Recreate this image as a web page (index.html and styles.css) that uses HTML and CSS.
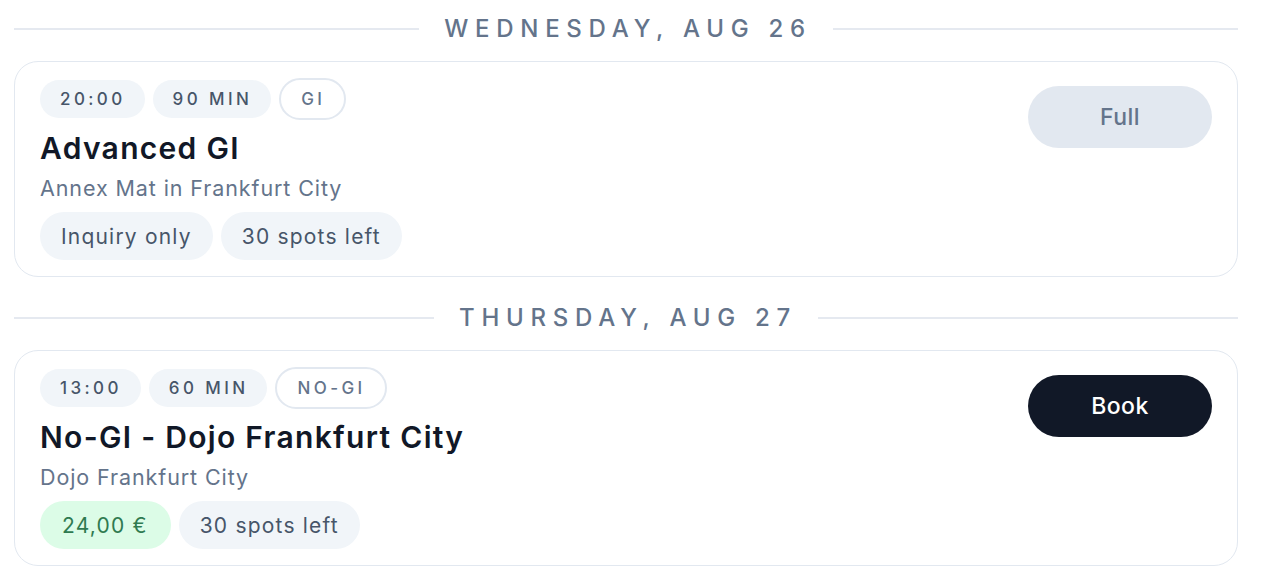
FILE: index.html
```html
<!DOCTYPE html>
<html lang="en">
<head>
<meta charset="utf-8">
<title>Schedule</title>
<link rel="stylesheet" href="styles.css">
</head>
<body>
<main class="schedule">
  <section class="day">
    <div class="day-divider">
      <span class="day-line"></span>
      <h2 class="day-label">Wednesday, Aug 26</h2>
      <span class="day-line"></span>
    </div>
    <article class="session">
      <div class="session-info">
        <div class="tags">
          <span class="tag">20:00</span>
          <span class="tag">90 min</span>
          <span class="tag tag-outline">GI</span>
        </div>
        <h3 class="session-title">Advanced GI</h3>
        <p class="session-place">Annex Mat in Frankfurt City</p>
        <div class="chips">
          <span class="chip">Inquiry only</span>
          <span class="chip">30 spots left</span>
        </div>
      </div>
      <button class="action action-full" type="button">Full</button>
    </article>
  </section>
  <section class="day">
    <div class="day-divider">
      <span class="day-line"></span>
      <h2 class="day-label">Thursday, Aug 27</h2>
      <span class="day-line"></span>
    </div>
    <article class="session">
      <div class="session-info">
        <div class="tags">
          <span class="tag">13:00</span>
          <span class="tag">60 min</span>
          <span class="tag tag-outline">No-GI</span>
        </div>
        <h3 class="session-title">No-GI - Dojo Frankfurt City</h3>
        <p class="session-place">Dojo Frankfurt City</p>
        <div class="chips">
          <span class="chip chip-price">24,00 €</span>
          <span class="chip">30 spots left</span>
        </div>
      </div>
      <button class="action action-book" type="button">Book</button>
    </article>
  </section>
</main>
</body>
</html>
```

FILE: styles.css
```css
* { box-sizing: border-box; }

html, body {
  margin: 0;
  padding: 0;
  background: #ffffff;
}

body {
  font-family: Inter, "Noto Sans", "Liberation Sans", sans-serif;
  color: #0f172a;
}

.schedule {
  width: 1224px;
  margin-left: 14px;
  display: flex;
  flex-direction: column;
  gap: 12px;
}

.day {
  display: flex;
  flex-direction: column;
}

.day-divider {
  display: flex;
  align-items: center;
  gap: 25px;
  height: 30px;
  margin-top: 14px;
  margin-bottom: 17px;
}

.day-line {
  flex: 1;
  height: 2px;
  background: #e5e9f0;
}

.day-label {
  margin: 0;
  font-size: 24px;
  font-weight: 500;
  letter-spacing: 0.28em;
  margin-right: -4px;
  text-transform: uppercase;
  color: #64748b;
  line-height: 30px;
}

.session {
  display: flex;
  justify-content: space-between;
  align-items: flex-start;
  border: 1.5px solid #e2e8f0;
  border-radius: 24px;
  padding: 16px 25px 16px 25px;
  height: 216px;
}

.session-info {
  display: flex;
  flex-direction: column;
  align-items: flex-start;
}

.tags {
  display: flex;
  align-items: center;
  gap: 8px;
  height: 42px;
}

.tag {
  display: inline-flex;
  align-items: center;
  height: 38px;
  padding: 0 19px 0 20px;
  border-radius: 999px;
  background: #f1f5f9;
  color: #475569;
  font-size: 17px;
  font-weight: 500;
  letter-spacing: 0.2em;
  text-transform: uppercase;
}

.tag-outline {
  height: 42px;
  background: #ffffff;
  border: 2px solid #e2e8f0;
  color: #64748b;
  padding: 0 19px 0 20px;
}

.session-title {
  margin: 10px 0 0;
  font-size: 30px;
  font-weight: 600;
  letter-spacing: 1.3px;
  line-height: 36px;
  color: #111827;
}

.session-place {
  margin: 8px 0 0;
  font-size: 21.5px;
  letter-spacing: 0.9px;
  line-height: 28px;
  color: #64748b;
}

.chips {
  display: flex;
  gap: 8px;
  margin-top: 10px;
}

.chip {
  display: inline-flex;
  align-items: center;
  height: 48px;
  padding: 0 21px;
  border-radius: 999px;
  background: #f1f5f9;
  color: #475569;
  font-size: 21px;
  letter-spacing: 1.2px;
}

.chip-price {
  background: #dcfce7;
  color: #2f7a50;
  padding: 0 23px 0 22px;
}

.action {
  margin-top: 8px;
  width: 184px;
  height: 62px;
  border: none;
  border-radius: 999px;
  font-family: inherit;
  font-size: 23px;
  font-weight: 500;
  letter-spacing: 0.5px;
}

.action-full {
  background: #e2e8f0;
  color: #64748b;
}

.action-book {
  background: #111827;
  color: #ffffff;
}
```
